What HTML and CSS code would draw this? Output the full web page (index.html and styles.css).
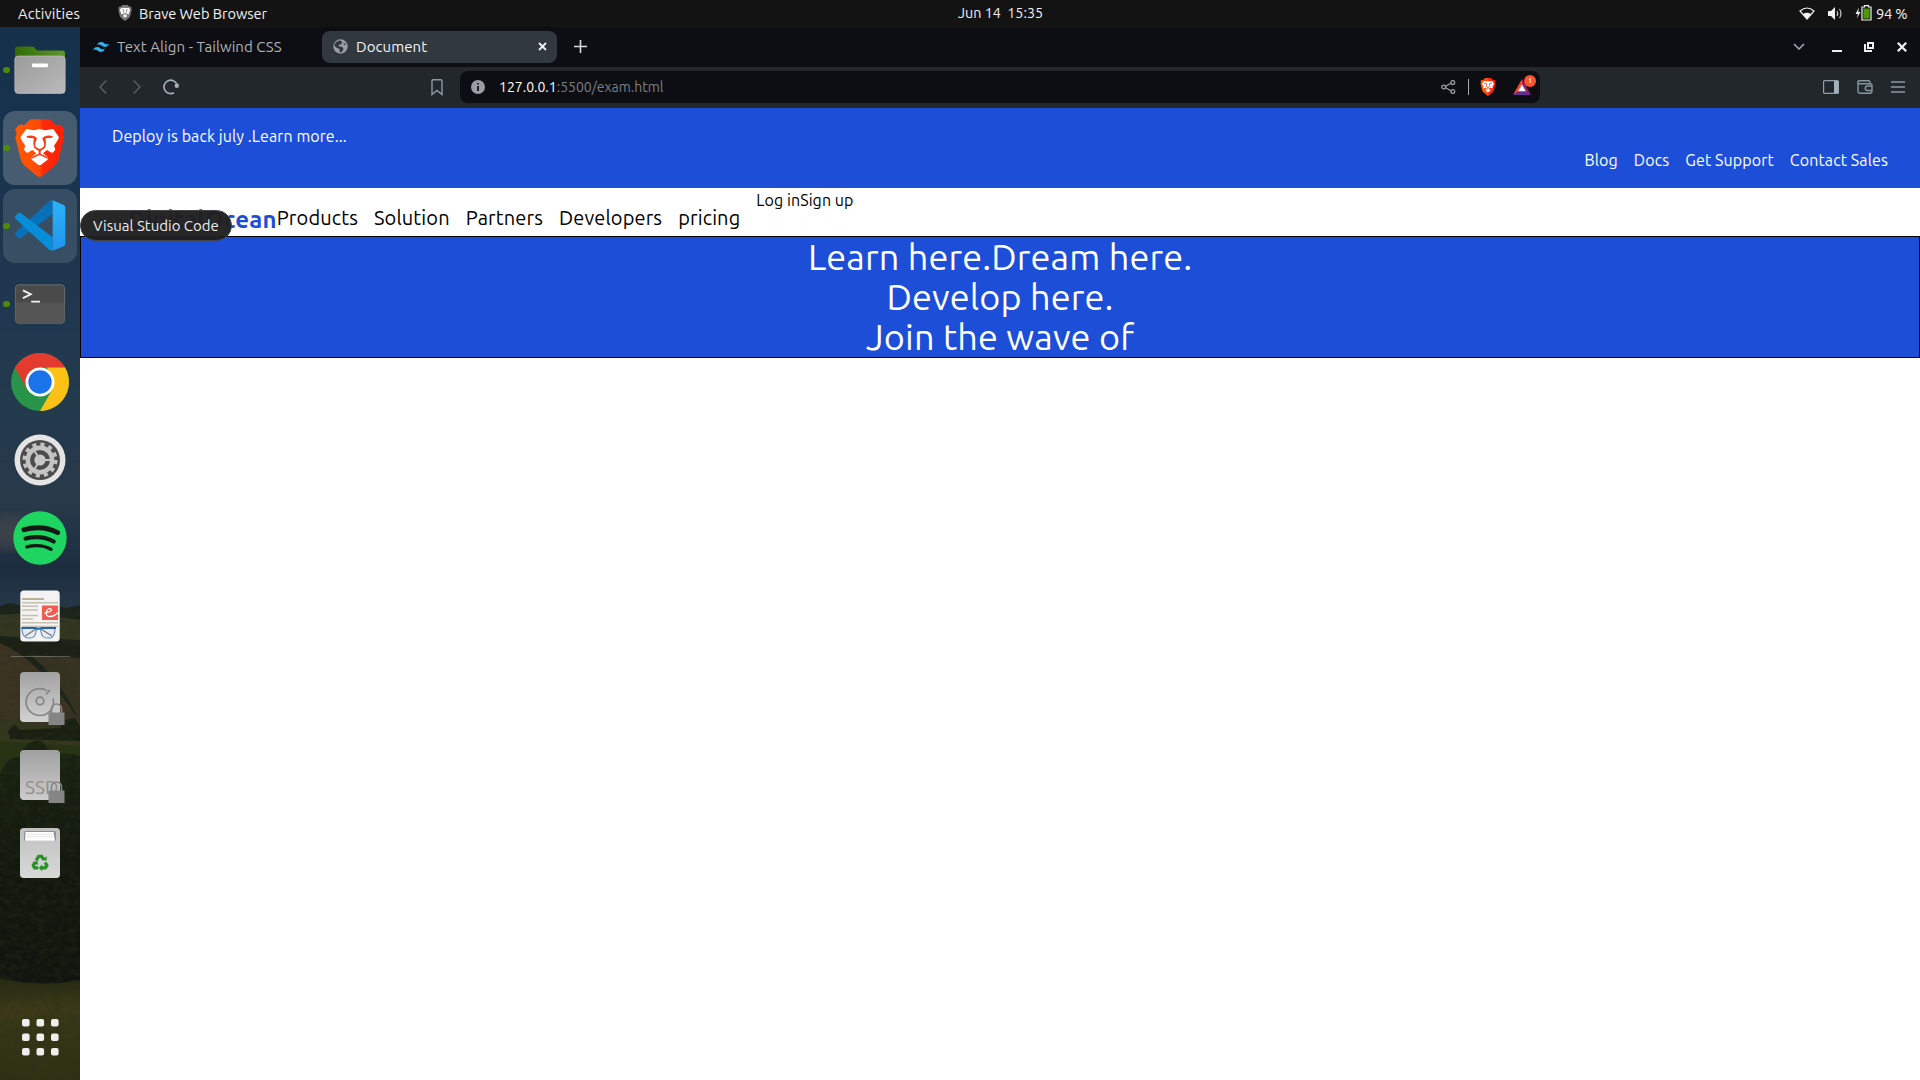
FILE: index.html
```html
<!DOCTYPE html>
<html lang="en">
<head>
<meta charset="utf-8">
<title>Document</title>
<link rel="stylesheet" href="styles.css">
</head>
<body>
<svg class="defs" width="0" height="0">
  <symbol id="lion" viewBox="46 41 148 176">
    <path fill="var(--shield, url(#shieldFill))" d="M92 42H150L168 60Q180 54 186 62L194 73L190 84L193 97L177 162Q174 173 165 181L128 212Q120 218 112 212L75 181Q66 173 63 162L47 97L51 84L46 73L54 62Q60 54 73 60Z"/>
    <path fill="#fff" d="M80 71L103 75L120 71L137 75L161 71L178 96Q175 106 163 121L167 132Q165 140 157 143L142 134L130 144L144 155V163L126 177Q120 183 114 177L96 163V155L110 144L98 134L83 143Q75 140 73 132L77 121Q65 106 62 96Z"/>
    <path fill="var(--lines, #fb3b12)" d="M81 92Q96 88 107 94L112 99L106 116L108 124L117 130H123L132 124L134 116L128 99L133 94Q144 88 159 92L158 97L138 99L139 117L136 128L123 137V145L144 155V160L120 149L96 160V155L117 145V137L104 128L101 117L102 99L82 97Z"/>
  </symbol>
  <symbol id="lock" viewBox="0 0 17 23">
    <path d="M3.500 11V7a5 5 0 0 1 10 0v4" fill="none" stroke="#858585" stroke-width="1.700"/>
    <path d="M.5 10.500h16V23H.5z" fill="#858585"/>
  </symbol>
  <linearGradient id="shieldFill"><stop offset="0" stop-color="#ff5a00"/><stop offset=".5" stop-color="#ff4a08"/><stop offset=".55" stop-color="#ff2b0c"/><stop offset="1" stop-color="#ff2000"/></linearGradient>
  <linearGradient id="metal" x2="0" y2="1"><stop offset="0" stop-color="#a2a2a2"/><stop offset="1" stop-color="#d2d2d2"/></linearGradient>
  <linearGradient id="folder" x2="1" y2="1"><stop offset="0" stop-color="#9b9b9b"/><stop offset="1" stop-color="#b9b9b9"/></linearGradient>
  <linearGradient id="green"><stop offset="0" stop-color="#326b05"/><stop offset="1" stop-color="#5d982c"/></linearGradient>
  <linearGradient id="codePanel" x2="0" y2="1"><stop offset="0" stop-color="#2bb2f6"/><stop offset="1" stop-color="#2196f0"/></linearGradient>
</svg>

<header class="topbar">
  <div class="topbar-left">
    <span class="activities">Activities</span>
    <svg class="app-shield" width="14" height="16"><use href="#lion"/></svg>
    <span class="app-name">Brave Web Browser</span>
  </div>
  <span class="clock">Jun 14&nbsp; 15:35</span>
  <div class="status">
    <svg width="16" height="13" viewBox="0 0 16 13"><path d="M1 4Q8-2 15 4L8 12Z" fill="none" stroke="#f2f2f2" stroke-width="1.200"/><path d="M3.800 7.200Q8 4.500 12.200 7.200L8 12Z" fill="#f2f2f2"/></svg>
    <svg class="volume" width="16" height="13" viewBox="0 0 16 13"><path d="M0 4h3l4-4v13L3 9H0z" fill="#f2f2f2"/><path d="M9 4q1.500 2.500 0 5M11.500 2q3 4.500 0 9" fill="none" stroke="#ccc" stroke-width="1.100"/></svg>
    <svg class="battery" width="17" height="16" viewBox="0 0 17 16"><path d="M4 2.500L.5 9H3L1.700 13.500L5.500 7H3.200z" fill="#f2f2f2"/><path d="M7 2h2.500V.7h4V2H16v13H7z" fill="none" stroke="#f2f2f2" stroke-width="1.200"/><path d="M8.400 3.500h6.200v10H8.400z" fill="#4e9a06"/></svg>
    <span class="percent">94 %</span>
  </div>
</header>

<main class="desktop">
  <aside class="dock">
    <svg class="wallpaper" width="80" height="1053" viewBox="0 27 80 1053" preserveAspectRatio="none">
      <defs>
        <linearGradient id="sky" x2="0" y2="1"><stop offset="0" stop-color="#14304b"/><stop offset=".5" stop-color="#20384f"/><stop offset=".8" stop-color="#273a4a"/><stop offset=".92" stop-color="#1c2d40"/><stop offset="1" stop-color="#2a3a4a"/></linearGradient>
        <linearGradient id="trees" x2="0" y2="1"><stop offset="0" stop-color="#1a2312"/><stop offset=".5" stop-color="#12180e"/><stop offset="1" stop-color="#11130f"/></linearGradient>
        <linearGradient id="grass" x2="0" y2="1"><stop offset="0" stop-color="#242911"/><stop offset=".3" stop-color="#3b3919"/><stop offset="1" stop-color="#2f3112"/></linearGradient>
        <filter id="leaves" x="0" y="0" width="1" height="1"><feTurbulence type="fractalNoise" baseFrequency=".13 .17" numOctaves="3" seed="4"/><feColorMatrix values="0 0 0 0 .02  0 0 0 0 .03  0 0 0 0 .01  0 2 0 0 -.7"/></filter>
        <filter id="soft"><feGaussianBlur stdDeviation="6"/></filter>
      </defs>
      <path fill="#2c2d1b" d="M0 27h80v1053H0z"/>
      <path fill="url(#sky)" d="M0 27h80v590H0z"/>
      <ellipse cx="8" cy="532" rx="24" ry="18" fill="#45464c" opacity=".7" filter="url(#soft)"/>
      <path fill="#1c231c" d="M0 606l10-3 8 2 12-2 14 4 12-2 10 3 14-3v110H0z"/>
      <path fill="#353722" d="M0 615l30-2 50 7v20l-80-4z"/>
      <path fill="#1b1f16" d="M0 637l20 3 20-3 40 8v20H0z"/>
      <path fill="#3d3424" d="M0 643Q40 660 80 722v20H0z"/>
      <path fill="#383322" d="M30 655l50 3v64q-20-44-50-67z"/>
      <path fill="#34381e" d="M0 719l80 10v35H0z"/>
      <path fill="#191f12" d="M8 731l7-7 5 6 40-2 5-8 10-2 5 8v15l-70-2z"/>
      <path fill="#293413" d="M0 741l80 5v40H0z"/>
      <path fill="url(#trees)" d="M0 775q6-19 19-18 6-16 20-17 8 3 12 16 14-5 29 0v232H0z"/>
      <path fill="url(#grass)" d="M0 978q40 10 80 2v100H0z"/>
      <path fill="#4a4119" opacity=".35" filter="url(#soft)" d="M0 1005l80-12v12L0 1020z"/>
      <path filter="url(#leaves)" opacity=".45" d="M0 605h80v475H0z"/>
    </svg>

    <div class="slot running"><svg width="52" height="48" viewBox="0 0 52 48"><path d="M1 22V3q0-2.500 2.500-2.500H18q2 0 3 2t3 2h24.500q2.500 0 2.500 2.500v15z" fill="url(#green)"/><rect x=".8" y="10" width="50.400" height="37.500" rx="3.500" fill="url(#folder)" stroke="#c6c6c6" stroke-width=".6"/><rect x="18" y="17.500" width="16" height="3.800" rx="1.300" fill="#fff"/></svg></div>
    <div class="slot running focused"><svg width="49.300" height="58.700"><use href="#lion"/></svg></div>
    <div class="slot running hovered"><svg width="52" height="51.400" viewBox="42 286 156 154"><path fill="#0870b8" d="M47 383L146 291Q151 287 158 287V328L62 401Q58 404 54 400L46 391Q43 387 47 383Z"/><path fill="#078ed9" d="M47 343Q43 339 46 335L54 326Q58 322 62 325L158 398V438Q151 438 146 434Z"/><path fill="url(#codePanel)" d="M158 287L191 301Q196 304 196 309V417Q196 422 191 425L158 438Z"/></svg></div>
    <div class="slot running"><svg width="52" height="40" viewBox="0 0 52 41"><rect x=".8" y=".8" width="50.400" height="39.400" rx="3.500" fill="#4a4a4a" stroke="#777" stroke-width=".8"/><path d="M1.200 19h49.600v17q0 4-3.500 4H4.500q-3.300 0-3.300-4z" fill="#555"/><path d="M8.500 6.500l8 4-8 4M17 18h9" fill="none" stroke="#f4f4f4" stroke-width="1.900"/></svg></div>
    <div class="slot"><svg width="58" height="58" viewBox="-29 -29 58 58"><circle r="29" fill="#27944a"/><path d="M-25.100-14.500A29 29 0 0 1 25.100-14.500H0L-13 7z" fill="#e33b2e"/><path d="M25.100-14.500A29 29 0 0 1 0 29L12.600 7 7-14.500z" fill="#fcc116"/><circle r="14.500" fill="#fff"/><circle r="11.700" fill="#1a73e8"/></svg></div>
    <div class="slot"><svg width="52" height="52" viewBox="-26 -26 52 52"><circle r="25.500" fill="#e4e4e4"/><circle r="20" fill="#4c4c4c"/><circle r="15.800" fill="none" stroke="#c4c4c4" stroke-width="3.400" stroke-dasharray="4.100 4.170"/><circle r="12.200" fill="none" stroke="#c4c4c4" stroke-width="4.400"/><circle r="5.600" fill="#c9c9c9"/><path d="M0 0H11M0 0L-6 10M0 0L-6-10" stroke="#c4c4c4" stroke-width="2"/></svg></div>
    <div class="slot"><svg width="54" height="54" viewBox="-27.500 -27.500 55 55"><circle r="27.200" fill="#1fd561"/><g fill="none" stroke="#131a16" stroke-linecap="round"><path d="M-16.300-8.500Q3-13.500 18-5.500" stroke-width="5"/><path d="M-14.700.5Q2-3.500 14 3.600" stroke-width="4.300"/><path d="M-13.500 9Q1 5.500 11.200 11.500" stroke-width="3.400"/></g></svg></div>
    <div class="slot"><svg width="40" height="52" viewBox="0 0 40 52"><rect x=".3" y=".5" width="39.400" height="51" rx="3.500" fill="#f3f3f3"/><path d="M2 9h22" stroke="#b9b29a" stroke-width="2"/><path d="M2 12.700h36M2 16.200h16M2 20h16M2 25.500h16M2 29h11M2 32.700h36M2 36.500h36" stroke="#c4c0b2" stroke-width="1.600"/><path d="M22 15.500h16v14.500H22z" fill="#f35b50"/><path d="M24.500 23q7-1 7-3.500-3-2.500-5 2-1 5 3 5 5 0 8.500-4" fill="none" stroke="#fff" stroke-width="1.300"/><path d="M2 38h13q2 0 1 4-1 6-6 6H8q-5 0-6-8zM35 38H22q-2 0-1 4 1 6 6 6h3q4 0 5-8z" fill="#dde3ea" fill-opacity=".6" stroke="#5f8cc4" stroke-width="1.100"/><path d="M1.500 38h13.500q3 1.500 7 0H36" fill="none" stroke="#2464b4" stroke-width="2.200"/><path d="M5 46l11-7M32 46l-11-7" stroke="#707985" stroke-width="1.300"/></svg></div>
    <hr class="dock-rule">
    <div class="slot"><svg width="40" height="50" viewBox="0 0 40 51" preserveAspectRatio="none"><rect width="40" height="51" rx="4" fill="url(#metal)"/><path d="M27 19A13.700 13.700 0 1 0 33 27M26 23l4-5" fill="none" stroke="#858585" stroke-width="1.700"/><circle cx="20" cy="29.500" r="3.800" fill="none" stroke="#858585" stroke-width="1.700"/></svg><svg class="lock" width="17" height="23"><use href="#lock"/></svg></div>
    <div class="slot"><div class="ssd">SSD</div><svg class="lock" width="17" height="23"><use href="#lock"/></svg></div>
    <div class="slot"><svg width="40" height="50" viewBox="0 0 40 51" preserveAspectRatio="none"><rect width="40" height="51" rx="4" fill="url(#metal)"/><rect width="40" height="51" rx="4" fill="#ddd" opacity=".5"/><path d="M4 13V5q0-2 2-2h28q2 0 2 2v8z" fill="#909090"/><path d="M5.500 4h28l1.500 9H5z" fill="#fff"/><path d="M6 6.500h28M6 9h28" stroke="#ddd" stroke-width=".8"/><g transform="translate(20 36) scale(.86) translate(-20 -37)"><path d="M15.500 33.500l3-4.700h3.500l2.500 4M26 36l2 3.500-1.800 3H21M18 42.500h-4.300l-1.500-3 2.300-3.800" fill="none" stroke="#259222" stroke-width="3.800"/><path d="M22 33l5.500 1 .5-5.500zM22.500 38.500v8l-4-4zM11.500 35.500l5.500-1.300 1 5z" fill="#259222"/></g></svg></div>
    <div class="slot apps"><svg width="37" height="37" viewBox="0 0 37 37" fill="#eeeeec"><rect width="7.600" height="7.600" rx="2"/><rect x="14.500" width="7.600" height="7.600" rx="2"/><rect x="29" width="7.600" height="7.600" rx="2"/><rect y="14.500" width="7.600" height="7.600" rx="2"/><rect x="14.500" y="14.500" width="7.600" height="7.600" rx="2"/><rect x="29" y="14.500" width="7.600" height="7.600" rx="2"/><rect y="29" width="7.600" height="7.600" rx="2"/><rect x="14.500" y="29" width="7.600" height="7.600" rx="2"/><rect x="29" y="29" width="7.600" height="7.600" rx="2"/></svg></div>
    <div class="tooltip">Visual Studio Code</div>
  </aside>

  <section class="browser">
    <div class="tabstrip">
      <div class="tab"><svg width="16" height="10" viewBox="0 0 16 10"><path fill="#2cb4f0" d="M4 3.300Q5 0 8.500 0c2.500 0 3 2.700 6 2.300.6-.1 1-.4 1.500-.8Q14.800 5 11.600 5C9 5 8.500 2.300 5.700 2.600 5 2.700 4.500 3 4 3.300zM0 8.300Q1 5 4.500 5c2.500 0 3 2.700 6 2.300.6-.1 1-.4 1.500-.8Q10.800 10 7.600 10C5 10 4.500 7.300 1.700 7.600 1 7.700.5 8 0 8.300z"/></svg><span class="tab-title">Text Align - Tailwind CSS</span></div>
      <div class="tab active"><svg width="15" height="15" viewBox="0 0 15 15"><circle cx="7.500" cy="7.500" r="7.200" fill="#9b9fa5"/><path d="M7 1.500l2 1-.5 2.500-3 1 1 1.500 3 .5 1 2-2 3.500-2-.5v-3L3 8.500 1.200 6Q3 2 7 1.500zM10.500 3.500l2.500 2-2 .5z" fill="#31383e"/></svg><span class="tab-title">Document</span><svg class="close" width="9" height="9" viewBox="0 0 9 9"><path d="M1 1l7 7M8 1L1 8" stroke="#f0f0f0" stroke-width="1.800"/></svg></div>
      <svg class="new-tab" width="13" height="13" viewBox="0 0 13 13"><path d="M6.500 0v13M0 6.500h13" stroke="#d8dadc" stroke-width="1.600"/></svg>
      <div class="window-buttons">
        <svg width="12" height="7" viewBox="0 0 12 7"><path d="M1 1l5 5 5-5" fill="none" stroke="#98a8b2" stroke-width="1.600"/></svg>
        <svg class="minimise" width="10" height="10" viewBox="0 0 10 10"><path d="M0 9h10" stroke="#eee" stroke-width="2"/></svg>
        <svg class="restore" width="10" height="10" viewBox="0 0 10 10"><path d="M4 1h5v5H4zM1 2v7h7" fill="none" stroke="#eee" stroke-width="2"/></svg>
        <svg class="quit" width="10" height="10" viewBox="0 0 10 10"><path d="M.8.8l8.400 8.400M9.200.8L.8 9.200" stroke="#f2f2f2" stroke-width="2.200"/></svg>
      </div>
    </div>
    <div class="toolbar">
      <div class="nav-buttons">
        <svg width="8" height="14" viewBox="0 0 8 14"><path d="M7.300.5L1 7l6.300 6.500" fill="none" stroke="#5a6469" stroke-width="1.300"/></svg>
        <svg width="8" height="14" viewBox="0 0 8 14"><path d="M.7.5L7 7 .7 13.500" fill="none" stroke="#5a6469" stroke-width="1.300"/></svg>
        <svg class="reload" width="17" height="16" viewBox="0 0 17 16"><path d="M11 13.700A6.700 6.700 0 1 1 14 5.500" fill="none" stroke="#a3b2ba" stroke-width="1.600"/><circle cx="13.800" cy="6.700" r="2.200" fill="#a3b2ba"/></svg>
      </div>
      <svg class="bookmark" width="12" height="17" viewBox="0 0 12 17"><path d="M1 15.500V2q0-1.200 1.200-1.200h7.600Q11 .8 11 2v13.500l-5-4z" fill="none" stroke="#8a9ba5" stroke-width="1.400"/></svg>
      <div class="address">
        <svg width="14" height="14" viewBox="0 0 14 14"><circle cx="7" cy="7" r="7" fill="#9b9ca5"/><path d="M7 6v5M7 3v1.600" stroke="#0d0e13" stroke-width="1.700"/></svg>
        <span class="url"><span class="host">127.0.0.1</span>:5500/exam.html</span>
        <svg class="share" width="15" height="14" viewBox="0 0 15 14"><path d="M3.500 7L11 2.500M3.500 7L11 11.500" stroke="#9a9ca3" stroke-width="1.300"/><g fill="#0d0e13" stroke="#9a9ca3" stroke-width="1.300"><circle cx="2.700" cy="7" r="1.900"/><circle cx="11.800" cy="2.500" r="1.900"/><circle cx="11.800" cy="11.500" r="1.900"/></g></svg>
        <i class="divider"></i>
        <svg class="shield" width="16" height="18"><use href="#lion"/></svg>
        <div class="rewards"><svg width="18" height="16" viewBox="0 0 18 16"><path d="M9 0L0 16l9-5.500z" fill="#ff4724"/><path d="M9 0l9 16-9-5.500z" fill="#9e1f63"/><path d="M0 16h18l-9-6z" fill="#662d91"/><path d="M9 5.500l3.800 6.700H5.200z" fill="#fff"/></svg><b class="badge">1</b></div>
      </div>
      <div class="tools">
        <svg width="16" height="14" viewBox="0 0 16 14"><rect x=".6" y=".6" width="14.800" height="12.800" rx="1" fill="none" stroke="#8fa0aa" stroke-width="1.200"/><path d="M11 1h4.500v12H11z" fill="#a3b2ba"/></svg>
        <svg width="16" height="14" viewBox="0 0 16 14"><path d="M1 2.500V11q0 2.300 2.300 2.300h9.500q2.200 0 2.200-2.300V5.500q0-1.800-2-1.800H2.500Q.8 3.700.8 2.200.8.700 2.500.7h9q1.500 0 1.500 1.500v1.500M15 6h-4.500a2.200 2.200 0 0 0 0 4.500H15" fill="none" stroke="#8696a0" stroke-width="1.400"/></svg>
        <svg width="14" height="12" viewBox="0 0 14 12"><path d="M0 1h14M0 6h14M0 11h14" stroke="#8a9aa3" stroke-width="1.300"/></svg>
      </div>
    </div>

    <div class="page">
      <div class="promo">
        <p>Deploy is back july .Learn more...</p>
        <nav class="promo-links"><a>Blog</a><a>Docs</a><a>Get Support</a><a>Contact Sales</a></nav>
      </div>
      <div class="site-nav">
        <h1 class="brand">DigitalOcean</h1>
        <nav class="menu"><a>Products</a><a>Solution</a><a>Partners</a><a>Developers</a><a>pricing</a></nav>
        <span class="account">Log inSign up</span>
      </div>
      <div class="hero"><p>Learn here.Dream here.</p><p>Develop here.</p><p>Join the wave of</p></div>
    </div>
  </section>
</main>
</body>
</html>
```
FILE: styles.css
```css
* { box-sizing: border-box; margin: 0; padding: 0; }
body {
  width: 1920px; height: 1080px; overflow: hidden;
  display: flex; flex-direction: column;
  font-family: Ubuntu, "Noto Sans", sans-serif; font-size: 16px;
  white-space: nowrap; background: #fff;
}
svg { display: block; flex: none; }
.defs { position: absolute; }

/* system bar */
.topbar {
  flex: none; height: 27px; background: #131313; color: #f2f2f2;
  display: grid; grid-template-columns: 958px 1fr auto; align-items: center;
  font-size: 14.667px; line-height: 27px; padding-right: 13px;
}
.topbar-left { display: flex; align-items: center; padding-left: 18px; }
.activities { width: 100px; letter-spacing: .2px; }
.app-name { letter-spacing: -.06px; }
.app-shield { --shield: #777; --lines: #666; margin-right: 7px; margin-top: -2px; }
.clock { font-size: 14.300px; line-height: 25px; }
.status { display: flex; align-items: center; }
.status svg { margin-top: -1px; }
.status .volume { margin-left: 13px; }
.status .battery { margin-left: 11px; margin-top: -2px; }
.percent { margin-left: 4px; width: 31px; letter-spacing: -.2px; }

.desktop { flex: 1; display: grid; grid-template-columns: 80px 1fr; }

/* dock */
.dock {
  position: relative; z-index: 1; height: 1053px;
  display: flex; flex-direction: column; align-items: center;
  gap: 4px; padding: 6px 0;
}
.wallpaper { position: absolute; inset: 0; z-index: -1; }
.slot {
  position: relative; flex: none; width: 74px; height: 74px; border-radius: 12px;
  display: grid; place-items: center;
}
.focused { background: rgba(255, 255, 255, .2); }
.hovered { background: rgba(255, 255, 255, .12); }
.running::before {
  content: ""; position: absolute; left: 0; top: 33.500px;
  width: 6.600px; height: 6.600px; border-radius: 50%; background: #4e8a06;
}
.dock-rule { width: 59px; height: 1px; border: 0; background: rgba(255, 255, 255, .25); margin: -1px 0; flex: none; }
.lock { position: absolute; left: 44.500px; top: 41.500px; }
.ssd {
  width: 40px; height: 50px; border-radius: 4px; padding: 25px 0 0 5px; overflow: hidden;
  background: linear-gradient(#a0a0a0, #ccc); color: #8d8d8d; font-size: 19px; line-height: 24px;
}
.apps { margin-top: auto; }
.tooltip {
  position: absolute; left: 80px; top: 183px; width: 152px; height: 31px;
  border: 1px solid #444; border-radius: 16px; background: rgba(32, 32, 32, .97);
  color: #eee; font-size: 15px; line-height: 29px; text-align: center;
}

/* browser chrome */
.browser { display: flex; flex-direction: column; min-width: 0; }
.tabstrip { height: 40px; background: #0d0e13; display: flex; align-items: center; padding: 0 13px 1px 0; }
.tab { width: 242px; height: 32px; display: flex; align-items: center; padding-left: 13px; color: #b0b2b5; }
.tab-title { margin-left: 8px; font-size: 15px; letter-spacing: .08px; }
.tab.active { width: 235px; background: #31383e; color: #f4f4f4; border-radius: 8px; padding: 0 10px 0 11px; }
.close { margin-left: auto; }
.new-tab { margin-left: 17px; }
.window-buttons { margin-left: auto; display: flex; align-items: center; }
.minimise { margin-left: 27px; }
.restore { margin-left: 22px; }
.quit { margin-left: 23px; }

.toolbar { height: 41px; background: #22272b; display: flex; align-items: center; padding: 0 15px 1px 19px; }
.nav-buttons { width: 332px; display: flex; align-items: center; gap: 26px; }
.reload { margin-left: -4px; }
.address {
  width: 1080px; height: 32px; margin-left: 17px; border-radius: 8px; background: #0d0e13;
  display: flex; align-items: center; padding: 0 9px 0 11px; font-size: 14px;
}
.url { margin-left: 14px; color: #7d7e82; }
.host { color: #fff; }
.share { margin-left: auto; }
.divider { width: 1px; height: 16px; background: #aaa; margin: 0 11px 0 12px; }
.rewards { position: relative; margin-left: 17px; }
.badge {
  position: absolute; left: 11px; top: -4px; width: 12px; height: 12px; border-radius: 6px;
  background: #ff5330; color: #fff; font-size: 8px; line-height: 12px; font-weight: 400; text-align: center;
}
.tools { margin-left: auto; display: flex; align-items: center; gap: 18px; }

/* page */
.page { flex: 1; background: #fff; color: #000; }
.promo {
  height: 80px; background: #1d4ed8; color: #fff; padding: 16px 32px;
  display: flex; flex-direction: column; line-height: 24px; letter-spacing: .08px;
}
.promo-links { display: flex; justify-content: flex-end; gap: 16px; letter-spacing: .11px; }
.site-nav { height: 48px; display: flex; padding-left: 48px; }
.brand { color: #1d4ed8; font-size: 24px; line-height: 64px; letter-spacing: .2px; }
.menu { display: flex; gap: 16px; font-size: 20px; line-height: 60px; letter-spacing: .13px; }
.account { margin-left: 16px; line-height: 24px; letter-spacing: .08px; }
.hero {
  height: 122px; border: 1px solid #000; background: #1d4ed8; color: #fff;
  text-align: center; font-size: 36px; line-height: 40px; letter-spacing: .13px;
}
```
